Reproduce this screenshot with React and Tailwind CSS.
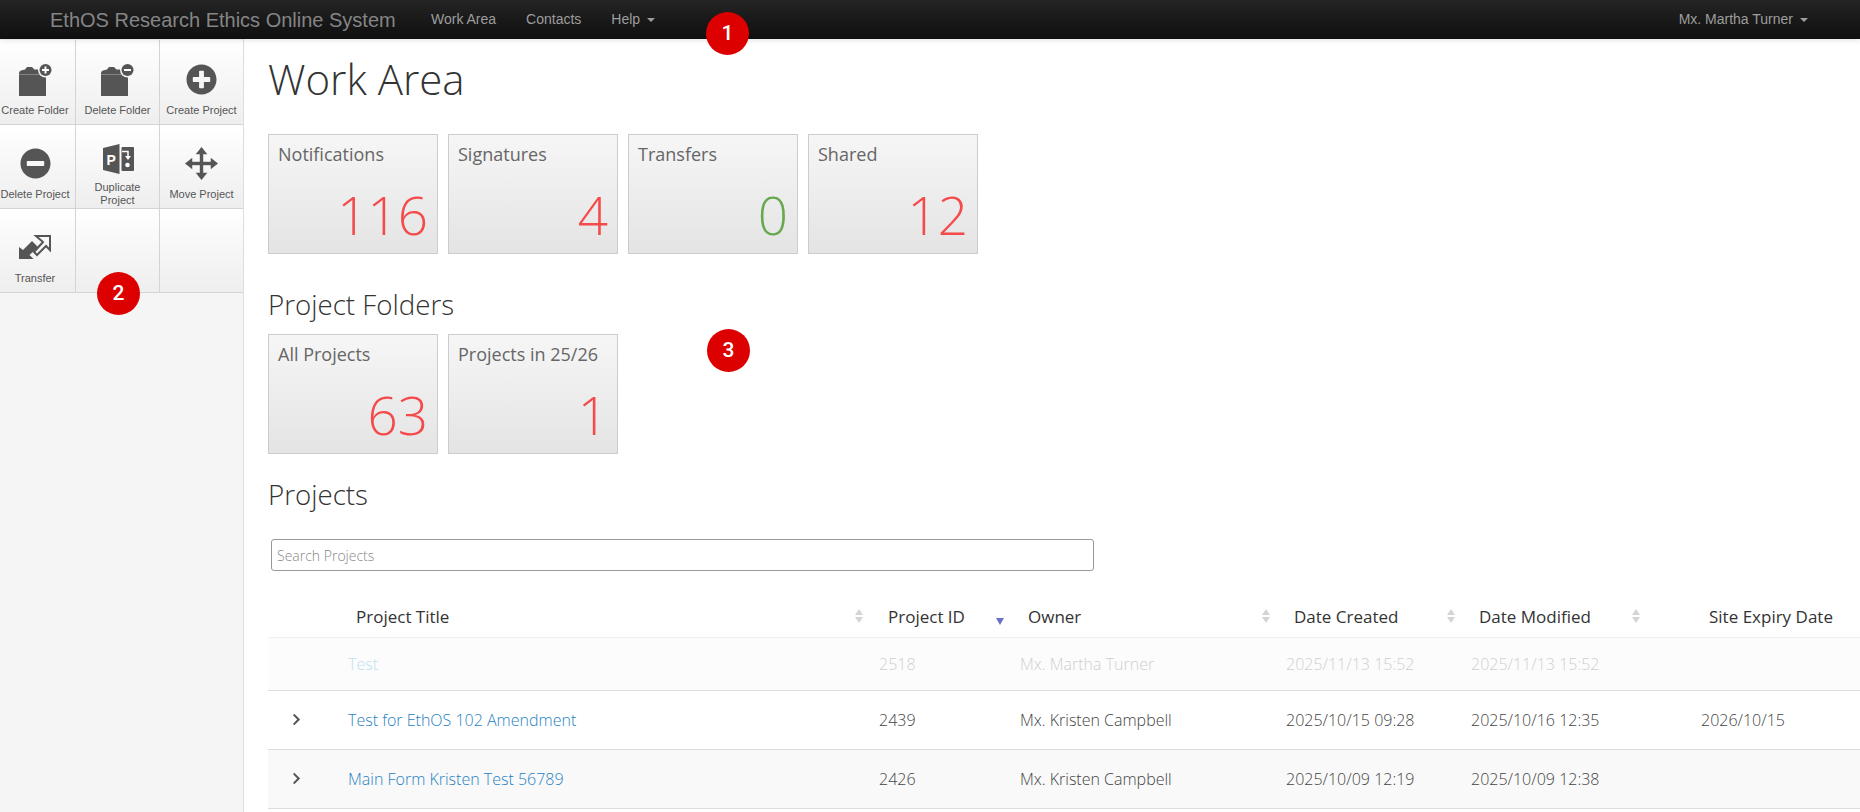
import React from "react";
import { FaPlusCircle, FaMinusCircle, FaChevronRight } from "react-icons/fa";

function FolderIcon({ minus }) {
  return (
    <svg width="39" height="38" viewBox="0 0 39 38" className="block">
      <g transform="translate(3 0)">
        <path d="M0 13 Q0 11 2 10.500 L6 9.500 L8 7 L13 7 L15.500 9.500 L25 9.500 Q27 9.500 27 12 L27 36 L0 36 Z" fill="#555" />
        <rect x="0" y="14" width="27" height="0.700" fill="#9a9a9a" />
        <circle cx="26.500" cy="10" r="7.500" fill="#f7f7f7" />
        <circle cx="26.500" cy="10" r="6" fill="#555" />
        <rect x="23" y="9" width="7" height="2" fill="#fff" />
        {!minus && <rect x="25.500" y="6.500" width="2" height="7" fill="#fff" />}
      </g>
    </svg>
  );
}

function DuplicateIcon() {
  return (
    <svg width="32" height="30" viewBox="0 0 32 30" className="block -mt-[9px]">
      <path d="M1 4 L17.500 0 L17.500 30 L1 26 Z" fill="#555" />
      <text x="4.500" y="20.500" fontFamily="Liberation Sans" fontWeight="700" fontSize="14" fill="#fff">P</text>
      <rect x="19.500" y="3" width="12.500" height="24" rx="1" fill="#555" />
      <path d="M20 7.500 L26 7.500 L26 13" stroke="#fff" strokeWidth="1.500" fill="none" />
      <path d="M23 12 L29 12 L26 16 Z" fill="#fff" />
      <circle cx="25.500" cy="21" r="2.300" fill="#fff" />
    </svg>
  );
}

function TransferIcon() {
  return (
    <svg width="32" height="24" viewBox="0 0 32 24" className="block">
      <path d="M0 12 L4 15 L13 6 L19 12 L10.500 20 L14.500 24 L0 24 Z" fill="#555" />
      <path d="M17 1 L31 1 L31 15 L27 11 L18 20 L15 17 L24 7 Z" fill="none" stroke="#555" strokeWidth="2" />
    </svg>
  );
}

function MoveIcon() {
  return (
    <svg width="33" height="33" viewBox="0 0 34 34" className="block">
      <rect x="15.250" y="4" width="3.500" height="26" fill="#555" />
      <rect x="4" y="15.250" width="26" height="3.500" fill="#555" />
      <path d="M17 0 L23 7.500 L11 7.500 Z" fill="#555" />
      <path d="M17 34 L23 26.500 L11 26.500 Z" fill="#555" />
      <path d="M0 17 L7.500 11 L7.500 23 Z" fill="#555" />
      <path d="M34 17 L26.500 11 L26.500 23 Z" fill="#555" />
    </svg>
  );
}

function SortArrows() {
  return (
    <svg width="8" height="14" viewBox="0 0 8 14" className="absolute right-[9px] top-1/2 -translate-y-1/2">
      <path d="M4 0 L8 6 L0 6 Z" fill="#d4d4d4" />
      <path d="M4 14 L8 8 L0 8 Z" fill="#d4d4d4" />
    </svg>
  );
}

const tools = [
  { label: "Create Folder", icon: <FolderIcon /> },
  { label: "Delete Folder", icon: <FolderIcon minus /> },
  { label: "Create Project", icon: <FaPlusCircle className="text-[31px] text-[#555]" /> },
  { label: "Delete Project", icon: <FaMinusCircle className="text-[31px] text-[#555]" /> },
  { label: <>Duplicate<br />Project</>, icon: <DuplicateIcon /> },
  { label: "Move Project", icon: <MoveIcon /> },
  { label: "Transfer", icon: <TransferIcon /> },
  { label: "", icon: null },
  { label: "", icon: null },
];

const workCards = [
  { title: "Notifications", value: "116", color: "text-[#f44a4a]" },
  { title: "Signatures", value: "4", color: "text-[#f44a4a]" },
  { title: "Transfers", value: "0", color: "text-[#6aa84f]" },
  { title: "Shared", value: "12", color: "text-[#f44a4a]" },
];

const folderCards = [
  { title: "All Projects", value: "63", color: "text-[#f44a4a]" },
  { title: "Projects in 25/26", value: "1", color: "text-[#f44a4a]" },
];

const rows = [
  { title: "Test", id: "2518", owner: "Mx. Martha Turner", created: "2025/11/13 15:52", modified: "2025/11/13 15:52", expiry: "", faded: true },
  { title: "Test for EthOS 102 Amendment", id: "2439", owner: "Mx. Kristen Campbell", created: "2025/10/15 09:28", modified: "2025/10/16 12:35", expiry: "2026/10/15" },
  { title: "Main Form Kristen Test 56789", id: "2426", owner: "Mx. Kristen Campbell", created: "2025/10/09 12:19", modified: "2025/10/09 12:38", expiry: "", striped: true },
];

function Badge({ n, className }) {
  return (
    <div className={`absolute z-30 w-[43px] h-[43px] rounded-full bg-[#dc0000] text-white flex items-center justify-center text-[21px] font-['Roboto',sans-serif] font-medium ${className}`}>
      {n}
    </div>
  );
}

function Caret() {
  return <span className="inline-block ml-[7px] align-middle w-0 h-0 border-x-[4px] border-x-transparent border-t-[4px] border-t-current"></span>;
}

function StatCard({ card }) {
  return (
    <div className="w-[170px] h-[120px] border border-[#cccccc] bg-gradient-to-b from-[#f6f6f6] to-[#e4e4e4] px-[9px] flex flex-col justify-between">
      <div className="text-[18px] leading-[24px] mt-[7px] text-[#666] font-normal">{card.title}</div>
      <div className={`text-[53px] leading-[60px] mb-[8px] font-light text-right ${card.color}`}>{card.value}</div>
    </div>
  );
}

function App() {
  return (
    <div className="relative w-[1860px] h-[812px] overflow-hidden bg-white font-['Open_Sans',sans-serif]">
      <Badge n="1" className="left-[706px] top-[12px]" />
      <Badge n="2" className="left-[97px] top-[272px]" />
      <Badge n="3" className="left-[707px] top-[329px]" />

      <header className="relative z-20 h-[39px] bg-gradient-to-b from-[#242424] to-[#0f0f0f] flex items-center pl-[50px] pr-[52px] text-[#9d9d9d] font-['Liberation_Sans',sans-serif] shadow-[0_1px_6px_rgba(0,0,0,0.12)]">
        <div className="text-[20px] text-[#858585] w-[381px]">EthOS Research Ethics Online System</div>
        <nav className="flex gap-[30px] text-[14px]">
          <span>Work Area</span>
          <span>Contacts</span>
          <span>Help<Caret /></span>
        </nav>
        <div className="ml-auto text-[14px]">Mx. Martha Turner<Caret /></div>
      </header>

      <div className="flex h-[773px]">
        <aside className="w-[244px] shrink-0 bg-[#f5f5f5] border-r border-[#dddddd] pt-[1px]">
          <div className="grid grid-cols-[76px_84px_83px] grid-rows-[85px_84px_84px]">
            {tools.map((tool, i) => (
              <div
                key={i}
                className="flex flex-col items-center justify-end pb-[2px] border-b border-r border-[#d4d4d4] bg-gradient-to-b from-white to-[#eeeeee] [&:nth-child(3n)]:border-r-0 [&:nth-child(3n+1)]:pr-[5px]"
              >
                <div className="h-[38px] flex items-center justify-center">{tool.icon}</div>
                <div className="h-[24px] flex items-center text-center text-[11px] leading-[13px] text-[#555] font-['Liberation_Sans',sans-serif]">
                  <span>{tool.label}</span>
                </div>
              </div>
            ))}
          </div>
        </aside>

        <main className="flex-1 min-w-0 pl-[24px]">
          <h1 className="mt-[18px] mb-[33px] text-[42px] leading-[44px] font-light text-[#333]">Work Area</h1>
          <div className="flex gap-[10px]">
            {workCards.map((c) => <StatCard key={c.title} card={c} />)}
          </div>

          <h2 className="mt-[30px] mb-[10px] text-[27.700px] leading-[40px] font-light text-[#333]">Project Folders</h2>
          <div className="flex gap-[10px]">
            {folderCards.map((c) => <StatCard key={c.title} card={c} />)}
          </div>

          <h2 className="mt-[20px] text-[27.700px] leading-[40px] font-light text-[#333]">Projects</h2>
          <input
            placeholder="Search Projects"
            className="block mt-[25px] ml-[3px] w-[823px] h-[32px] px-[5px] text-[14px] border border-[#999] rounded-[3px] outline-none placeholder:text-[#888] font-light"
          />

          <table className="mt-[25px] w-[1592px] table-fixed border-collapse text-[16px]">
            <colgroup>
              <col className="w-[72px]" />
              <col className="w-[532px]" />
              <col className="w-[140px]" />
              <col className="w-[267px]" />
              <col className="w-[185px]" />
              <col className="w-[185px]" />
              <col className="w-[211px]" />
            </colgroup>
            <thead>
              <tr className="h-[41px] text-left text-[17px] text-[#333] border-b border-[#f0f0f0]">
                <th className="font-normal"></th>
                <th className="relative font-normal pl-[16px]">Project Title<SortArrows /></th>
                <th className="relative font-normal pl-[16px]">
                  Project ID
                  <svg width="8" height="7" viewBox="0 0 8 7" className="absolute right-[8px] top-[22px]">
                    <path d="M4 7 L8 0 L0 0 Z" fill="#6b70c9" />
                  </svg>
                </th>
                <th className="relative font-normal pl-[16px]">Owner<SortArrows /></th>
                <th className="relative font-normal pl-[15px]">Date Created<SortArrows /></th>
                <th className="relative font-normal pl-[15px]">Date Modified<SortArrows /></th>
                <th className="font-normal pl-[60px]">Site Expiry Date</th>
              </tr>
            </thead>
            <tbody className="font-light text-[#444]">
              {rows.map((r) => (
                <tr
                  key={r.id}
                  className={`border-b border-[#dddddd] ${r.faded ? "h-[53px] bg-[#fcfcfc]" : "h-[59px]"} ${r.striped ? "bg-[#f9f9f9]" : ""}`}
                >
                  <td className="pl-[22px]">
                    {!r.faded && <FaChevronRight className="text-[13px] text-[#555]" />}
                  </td>
                  <td className="pl-[8px]">
                    <a className={r.faded ? "text-[#bcdff1]" : "text-[#1f82c4]"}>{r.title}</a>
                  </td>
                  <td className={`pl-[7px] ${r.faded ? "opacity-25" : ""}`}>{r.id}</td>
                  <td className={`pl-[8px] ${r.faded ? "opacity-25" : ""}`}>{r.owner}</td>
                  <td className={`pl-[7px] ${r.faded ? "opacity-25" : ""}`}>{r.created}</td>
                  <td className={`pl-[7px] ${r.faded ? "opacity-25" : ""}`}>{r.modified}</td>
                  <td className="pl-[52px]">{r.expiry}</td>
                </tr>
              ))}
            </tbody>
          </table>
        </main>
      </div>
    </div>
  );
}

export default App;
